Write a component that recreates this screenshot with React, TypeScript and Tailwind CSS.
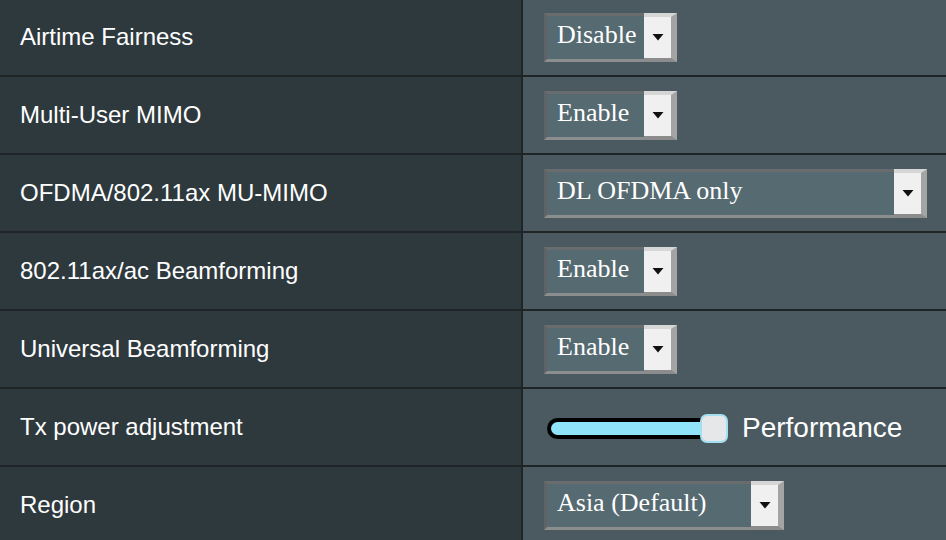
import React from 'react';

type Row = {
  label: string;
  kind: 'select' | 'slider';
  value?: string;
  width?: number;
};

const rows: Row[] = [
  { label: 'Airtime Fairness', kind: 'select', value: 'Disable', width: 133 },
  { label: 'Multi-User MIMO', kind: 'select', value: 'Enable', width: 133 },
  { label: 'OFDMA/802.11ax MU-MIMO', kind: 'select', value: 'DL OFDMA only', width: 383 },
  { label: '802.11ax/ac Beamforming', kind: 'select', value: 'Enable', width: 133 },
  { label: 'Universal Beamforming', kind: 'select', value: 'Enable', width: 133 },
  { label: 'Tx power adjustment', kind: 'slider' },
  { label: 'Region', kind: 'select', value: 'Asia (Default)', width: 240 },
];

function Select({ value, width }: { value: string; width: number }) {
  return (
    <div className="flex h-[49px]" style={{ width }}>
      <div className="flex-1 flex items-center pl-[10px] pb-[5px] bg-[#566a71] border-t-[3px] border-l-[3px] border-b-[3px] border-t-[#686c6e] border-l-[#5f6365] border-b-[#8c8d8e] text-white text-[26px] font-['Liberation_Serif',serif] leading-none whitespace-nowrap">
        {value}
      </div>
      <div className="w-[33px] flex items-center justify-center bg-[#f0f0f0] border-t-4 border-r-[6px] border-b-4 border-t-[#d6d6d6] border-r-[#a4a4a4] border-b-[#8c8c8c]">
        <svg width="12" height="8" viewBox="0 0 12 8">
          <polygon points="0.5,1 11.5,1 6,7.5" fill="#111" />
        </svg>
      </div>
    </div>
  );
}

function Slider() {
  return (
    <div className="flex items-center pt-[2px] ml-[3px]">
      <div className="relative w-[181px] h-[29px] flex items-center">
        <div className="w-[165px] h-[21px] rounded-full bg-[#8fe4f9] border-4 border-black" />
        <div className="absolute left-[153px] top-0 w-[28px] h-[29px] rounded-[7px] bg-[#e6e7e8] border-2 border-[#a3dff0]" />
      </div>
      <span className="ml-[14px] text-white text-[28px] font-['Liberation_Sans',Arial,sans-serif] leading-none">
        Performance
      </span>
    </div>
  );
}

export default function App() {
  return (
    <div className="w-[946px] h-[540px] overflow-hidden bg-[#4a5a60]">
      <div className="-mt-px">
        {rows.map((row) => (
          <div key={row.label} className="flex h-[78px] border-b-2 border-[#1f2427]">
            <div className="w-[523px] flex items-center pl-5 bg-[#2e393e] border-r-2 border-[#1f2427] text-white text-[24px] font-['Liberation_Sans',Arial,sans-serif]">
              {row.label}
            </div>
            <div className="flex-1 flex items-center pl-[21px] bg-[#4a5a60]">
              {row.kind === 'select' ? (
                <Select value={row.value!} width={row.width!} />
              ) : (
                <Slider />
              )}
            </div>
          </div>
        ))}
      </div>
    </div>
  );
}
